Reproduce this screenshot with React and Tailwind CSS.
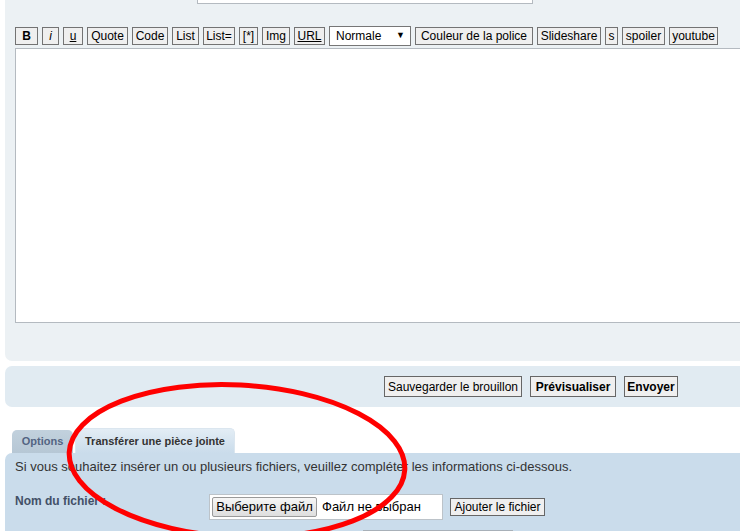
import React from "react";

const tools = [
  { label: "B", w: "w-[23px]", cls: "font-bold" },
  { label: "i", w: "w-[17px]", cls: "italic" },
  { label: "u", w: "w-[20px]", cls: "underline" },
  { label: "Quote", w: "w-[41px]", cls: "" },
  { label: "Code", w: "w-[36px]", cls: "" },
  { label: "List", w: "w-[27px]", cls: "" },
  { label: "List=", w: "w-[32px]", cls: "" },
  { label: "[*]", w: "w-[19px]", cls: "" },
  { label: "Img", w: "w-[28px]", cls: "" },
  { label: "URL", w: "w-[31px]", cls: "underline" },
];

const tools2 = [
  { label: "Couleur de la police", w: "w-[118px]" },
  { label: "Slideshare", w: "w-[64px]" },
  { label: "s", w: "w-[13px]" },
  { label: "spoiler", w: "w-[43px]" },
  { label: "youtube", w: "w-[49px]" },
];

function ToolButton({ label, w, cls = "" }) {
  return (
    <button
      className={`${w} h-[18px] shrink-0 flex items-center justify-center bg-[#efefef] border border-[#737373] text-[12px] leading-none text-black ${cls}`}
    >
      {label}
    </button>
  );
}

export default function App() {
  return (
    <div className="relative w-[740px] h-[531px] overflow-hidden bg-white font-['Liberation_Sans',Arial,sans-serif] text-[#333]">
      <div className="w-[780px]">
        {/* editeur */}
        <div className="ml-[5px] bg-[#ecf1f4] rounded-bl-[7px] pb-[38px]">
          <div className="ml-[192px] w-[336px] h-[4px] bg-white border-x border-b border-[#b4bac0]" />

          <div className="mt-[22px] ml-[10px] h-[20px] flex items-center gap-[4px]">
            {tools.map((t) => (
              <ToolButton key={t.label} {...t} />
            ))}
            <div className="w-[82px] h-[20px] shrink-0 bg-white border border-[#767676] flex items-center justify-between pl-[6px] pr-[5px] text-[12px] text-black">
              <span>Normale</span>
              <span className="text-[9px]">▼</span>
            </div>
            {tools2.map((t) => (
              <ToolButton key={t.label} {...t} />
            ))}
          </div>

          <div className="mt-[2px] ml-[10px] h-[275px] bg-white border border-[#b4bac0]" />
        </div>

        {/* actions */}
        <div className="mt-[5px] ml-[5px] h-[41px] bg-[#e1ebf2] rounded-[7px] flex items-center gap-2 pl-[379px]">
          <button className="w-[138px] h-[21px] bg-[#efefef] border border-[#666] text-[12px] text-black">
            Sauvegarder le brouillon
          </button>
          <button className="w-[86px] h-[21px] bg-[#efefef] border border-[#666] text-[12px] font-bold text-black">
            Prévisualiser
          </button>
          <button className="w-[54px] h-[21px] bg-[#efefef] border border-[#666] text-[12px] font-bold text-black">
            Envoyer
          </button>
        </div>

        {/* onglets */}
        <div className="mt-[21px] ml-[12px] flex items-end gap-[2px]">
          <div className="w-[61px] h-[23px] rounded-t-[5px] bg-linear-to-b from-[#c2d1dd] to-[#b6c7d5] flex items-center justify-center text-[11px] font-bold text-[#536482]">
            Options
          </div>
          <div className="w-[160px] h-[25px] rounded-t-[5px] border border-b-0 border-[#dbe6ef] bg-linear-to-b from-[#e3edf5] to-[#cadceb] flex items-center justify-center text-[11px] font-bold text-[#333]">
            Transférer une pièce jointe
          </div>
        </div>

        <div className="ml-[5px] bg-[#cadceb] rounded-tl-[7px] pt-[6px] pl-[10px] h-[100px]">
          <p className="text-[13px] leading-[16px] text-[#333]">
            Si vous souhaitez insérer un ou plusieurs fichiers, veuillez compléter les informations ci-dessous.
          </p>
          <div className="mt-[19px] flex items-start">
            <div className="w-[194px] text-[12px] font-bold text-[#425067] leading-[14px]">
              Nom du fichier :
            </div>
            <div className="w-[234px] h-[26px] bg-white border border-[#bcc3c9] flex items-center pl-[2px]">
              <div className="h-[20px] w-[105px] rounded-[2px] border border-[#9a9a9a] bg-linear-to-b from-[#f6f6f6] to-[#dedede] flex items-center justify-center text-[13px] text-black">
                Выберите файл
              </div>
              <span className="ml-[5px] text-[13px] text-black">Файл не выбран</span>
            </div>
            <button className="ml-[7px] mt-[4px] w-[95px] h-[18px] bg-[#efefef] border border-[#666] text-[12px] leading-none text-black">
              Ajouter le fichier
            </button>
          </div>
          <div className="mt-[10px] ml-[348px] w-[150px] h-[4px] border-t border-[#a8b0b8] bg-white" />
        </div>
      </div>

      {/* annotation */}
      <svg className="absolute left-0 top-0 pointer-events-none" width="740" height="531" viewBox="0 0 740 531">
        <ellipse cx="237" cy="461" rx="168" ry="76" fill="none" stroke="#ff0000" strokeWidth="5" transform="rotate(3 237 461)" />
      </svg>
    </div>
  );
}
